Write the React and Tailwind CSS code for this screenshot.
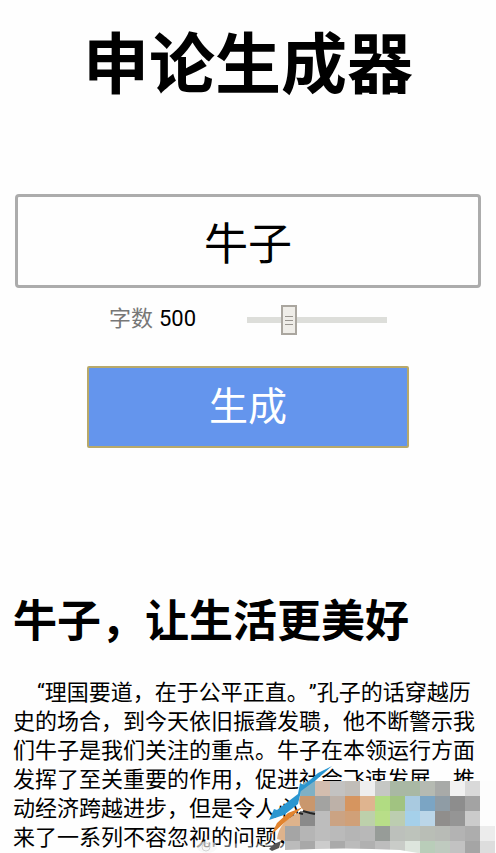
import { useState } from "react";

// mosaic colours, one row per 15px band, starting at x = 285
const mosaic = [
  [null, null, "#d3bdae", "#c3c2c1", "#c1bdb8", "#eeeeee", "#c5c7c4", "#a9b8a4", "#a9b8a4", "#b5bab2", "#a8aaa8", "#f1f1f1", "#d9d9d9", "#a5a5a5"],
  [null, null, "#a3a3a1", "#bdb1a8", "#d6955f", "#dfb48f", "#b1dc82", "#a1c381", "#a9cae0", "#7ba5c4", "#8f9ca5", "#8d8d8d", "#a3a3a3"],
  [null, "#8a8a8a", "#bdbdbd", "#cba383", "#d0a078", "#bdd0ab", "#b8de88", "#bccdb0", "#a5d0ea", "#bbd6e8", "#908e8c", "#959595", "#cbcbcb"],
  ["#a5a5a5", "#b5b5b5", "#bdbdbd", "#bababa", "#b5b5b5", "#b8b8b8", "#979c98", "#bcc0bb", "#bdc3bb", "#b9beb6", "#b8bbb6", "#b3b3b3", "#adadad", "#ececec"],
  ["#bbbbbb", "#a8a8a8", "#cccccc", "#aaaaaa", "#bbbbbb", "#b0b0b0", "#bdbdbd", "#c9ccc8", "#dde5dd", "#b9cdb9", "#bfcabf", "#c2c2c2", "#a5a5a5", "#dddddd"],
];

function Watermark() {
  return (
    <svg
      viewBox="180 760 316 93"
      className="pointer-events-none absolute right-0 bottom-0 h-[93px] w-[316px]"
      aria-hidden="true"
    >
      {/* faint account mark under the last line */}
      <ellipse cx="207" cy="846" rx="10" ry="6" fill="#f4f4f4" fillOpacity="0.65" />
      <circle cx="206" cy="846" r="4" fill="none" stroke="#bbb" strokeOpacity="0.6" />
      <path d="M221 846H290" stroke="#fff" strokeOpacity="0.4" strokeWidth="7" strokeDasharray="9 2" />

      <path d="M304 781L315 780V796H300Q300 788 304 781Z" fill="#7fb0c4" />
      <path d="M300 795H315V810H304Q297 803 300 795Z" fill="#c9976d" />
      <path d="M300 811V826H285V840L277 838Q279 820 300 811Z" fill="#deb38c" />
      {mosaic.map((row, r) =>
        row.map(
          (color, i) =>
            color && (
              <rect
                key={r + "-" + i}
                x={285 + i * 15}
                y={780 + r * 15}
                width="15"
                height="15"
                fill={color}
              />
            )
        )
      )}
      <rect x="480" y="780" width="16" height="45" fill="#fdfdfd" />
      <path d="M270 853L285 849Q345 846 400 849L424 853Z" fill="#fff" />
      <path d="M332 765L318 772L304 784L300 782L298 793L277 809L274 808L269 819L284 814L298 803L301 790L316 779Z" fill="#2a96d0" />
      <path d="M303 806L288 812L277 822L271 834L284 822L297 811Z" fill="#e2842f" />
      <path d="M303 810L310 812L315 813M299 812L303 813" stroke="#222" strokeWidth="2" fill="none" />
      <path d="M281 840L274 843L269 848L272 850L279 847Z" fill="#555" />
    </svg>
  );
}

export default function App() {
  const [topic, setTopic] = useState("牛子");
  const [count, setCount] = useState(500);

  return (
    <div
      className="relative overflow-hidden bg-[#fefefe] font-['Roboto','Noto_Sans_CJK_SC',sans-serif] text-black"
      lang="zh-CN"
    >
      <main className="flex flex-col px-[13px] pt-[26px] pb-[2px]">
        <h1 className="text-center text-[66px] leading-[80px] font-bold">申论生成器</h1>
        <div className="mt-[88px] flex px-0.5">
          <input
            type="text"
            aria-label="主题"
            value={topic}
            onChange={(e) => setTopic(e.target.value)}
            className="h-[94px] w-full rounded-sm border-3 border-[#acacac] text-center text-[44px] outline-none"
          />
        </div>
        <div className="mt-2.5 flex h-10 items-center justify-center">
          <label htmlFor="count" className="text-[22px] text-[#777]">
            字数
          </label>
          <output htmlFor="count" className="ml-1.5 text-[22px]">
            {count}
          </output>
          <input
            id="count"
            type="range"
            min="0"
            max="1824"
            value={count}
            onChange={(e) => setCount(Number(e.target.value))}
            className="mt-1 ml-[51px] h-8 w-[140px] appearance-none bg-transparent [&::-webkit-slider-runnable-track]:h-1.5 [&::-webkit-slider-runnable-track]:bg-[#dddeda] [&::-webkit-slider-thumb]:-mt-3 [&::-webkit-slider-thumb]:h-[30px] [&::-webkit-slider-thumb]:w-4 [&::-webkit-slider-thumb]:appearance-none [&::-webkit-slider-thumb]:border-2 [&::-webkit-slider-thumb]:border-[#aaa69f] [&::-webkit-slider-thumb]:bg-[#efede8] [&::-webkit-slider-thumb]:bg-[linear-gradient(#99958f_1px,transparent_1px,transparent_4px,#99958f_4px,#99958f_5px,transparent_5px,transparent_8px,#99958f_8px)] [&::-webkit-slider-thumb]:bg-[length:8px_9px] [&::-webkit-slider-thumb]:bg-center [&::-webkit-slider-thumb]:bg-no-repeat"
          />
        </div>
        <button
          type="button"
          className="mt-7 h-[82px] w-[322px] self-center rounded-xs border-2 border-[#b8a96a] bg-[#6495ed] text-[39px] text-white"
        >
          生成
        </button>
        <h2 className="mt-[142px] text-[44px] leading-[64px] font-bold">牛子，让生活更美好</h2>
        <p className="mt-6 indent-6 text-[22px] leading-[29px] [text-spacing-trim:space-all]">
          “理国要道，在于公平正直。”孔子的话穿越历史的场合，到今天依旧振聋发聩，他不断警示我们牛子是我们关注的重点。牛子在本领运行方面发挥了至关重要的作用，促进社会飞速发展，推动经济跨越进步，但是令人心
          <br />
          来了一系列不容忽视的问题，
        </p>
      </main>
      <Watermark />
    </div>
  );
}
